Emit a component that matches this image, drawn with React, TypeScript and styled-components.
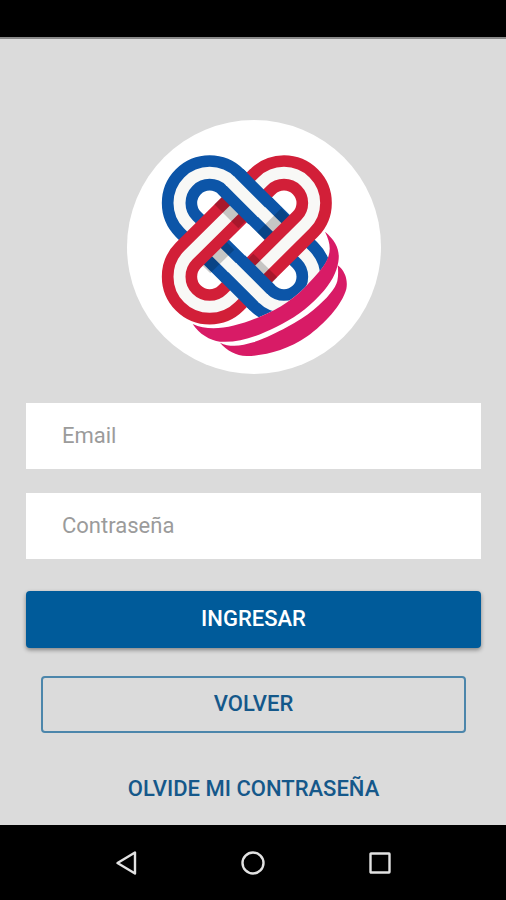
import React from "react";
import styled, { createGlobalStyle } from "styled-components";

const GlobalStyle = createGlobalStyle`
  *, *::before, *::after { box-sizing: border-box; }
  body {
    margin: 0;
    background: #dbdbdb;
    font-family: Roboto, "Liberation Sans", sans-serif;
  }
`;

const Screen = styled.div`
  display: flex;
  flex-direction: column;
  min-height: 100vh;
`;

const StatusBar = styled.header`
  height: 39px;
  background: #000;
  border-bottom: 2px solid #8a8a8a;
`;

const Content = styled.main`
  flex: 1;
  display: flex;
  flex-direction: column;
  align-items: center;
  padding: 81px 25px 16px 26px;
`;

const LogoArt = styled.svg`
  display: block;
  width: 254px;
  height: 254px;
`;

const Form = styled.form`
  display: flex;
  flex-direction: column;
  align-items: stretch;
  width: 100%;
  margin-top: 29px;
`;

const Field = styled.input`
  height: 66px;
  margin-bottom: 24px;
  padding: 0 36px 2px;
  border: 0;
  border-radius: 0;
  outline-color: #005b9a;
  background: #fff;
  color: #333;
  font: 400 22px/26px Roboto, "Liberation Sans", sans-serif;

  &::placeholder {
    color: #9b9b9b;
    opacity: 1;
  }
`;

const Button = styled.button<{ $outlined?: boolean }>`
  height: 57px;
  margin: ${(p) => (p.$outlined ? "28px 15px 0" : "8px 0 0")};
  padding: 0 16px 2px;
  border: ${(p) => (p.$outlined ? "2px solid #4c86ab" : "0")};
  border-radius: 4px;
  background: ${(p) => (p.$outlined ? "transparent" : "#005b9a")};
  box-shadow: ${(p) => (p.$outlined ? "none" : "0 2px 4px rgba(0, 0, 0, 0.4)")};
  color: ${(p) => (p.$outlined ? "#15588a" : "#fff")};
  font: 500 22px/26px Roboto, "Liberation Sans", sans-serif;
  text-transform: uppercase;
  cursor: pointer;
`;

const ForgotLink = styled.a`
  align-self: center;
  margin-top: 43px;
  color: #15588a;
  font-size: 22px;
  font-weight: 500;
  line-height: 26px;
  text-transform: uppercase;
  text-decoration: none;
`;

const NavBar = styled.nav`
  display: flex;
  justify-content: center;
  align-items: center;
  gap: 87px;
  height: 75px;
  background: #000;
`;

const NavButton = styled.button`
  display: flex;
  justify-content: center;
  align-items: center;
  width: 40px;
  height: 40px;
  padding: 0;
  border: 0;
  background: none;
  color: #e2e2e2;
  cursor: pointer;

  svg {
    width: 28px;
    height: 28px;
    fill: none;
    stroke: currentColor;
    stroke-width: 2.4;
    stroke-linejoin: round;
  }
`;

const BLUE = "#0c55a8";
const RED = "#d21f38";
const PINK = "#d81b66";
const STRIPE = "#f8f8f6";

const BLUE_LOOP =
  "M331 198L554 419A90 90 0 0 1 426 547L203 326A90 90 0 0 1 331 198Z";
const RED_LOOP =
  "M426 198A90 90 0 0 1 554 326L331 547A90 90 0 0 1 203 419Z";
const BLUE_OVER = "M331 198L421 288M426 547L336 457";
const BLUE_OVER_STRIPE = "M328 195L424 291M429 550L333 454";

function Ribbon({
  d,
  color,
  stripe = d,
}: {
  d: string;
  color: string;
  stripe?: string;
}) {
  return (
    <g fill="none">
      <path d={d} stroke={color} strokeWidth={106} />
      <path d={stripe} stroke={STRIPE} strokeWidth={36} />
    </g>
  );
}

function Logo() {
  return (
    <LogoArt viewBox="19 13 762 762" role="img" aria-label="Logo">
      <circle cx={400} cy={394} r={381} fill="#fff" />
      <Ribbon d={BLUE_LOOP} color={BLUE} />
      <g fill="#000" fillOpacity={0.2}>
        <path d="M410 350L434 374L506 302L482 278Z" />
        <path d="M246 450L269 473L341 402L317 378Z" />
      </g>
      <Ribbon d={RED_LOOP} color={RED} />
      <g fill="#000" fillOpacity={0.2}>
        <path d="M281 266L353 338L376 315L304 243Z" />
        <path d="M374 438L398 414L470 485L446 510Z" />
      </g>
      <Ribbon d={BLUE_OVER} stripe={BLUE_OVER_STRIPE} color={BLUE} />
      <path
        d="M613 348C640 402 634 432 568 498C528 545 478 578 418 603C340 636 270 650 216 625L300 684L390 721L540 670L646 580L670 480Z"
        fill="#fff"
      />
      <path
        d="M613 348C638 400 634 432 568 498C528 545 478 578 418 603C340 636 270 650 216 625C235 655 268 674 298 678C355 682 410 662 468 633C515 610 558 582 598 538C632 502 648 470 653 438C659 403 645 375 613 348Z"
        fill={PINK}
      />
      <path
        d="M651 449C674 466 682 494 677 520C664 568 612 624 560 662C500 704 430 721 378 721C345 719 320 706 298 681C330 697 365 690 398 680C434 668 470 650 498 635C530 617 556 601 578 583C620 548 645 518 650 496C653 480 653 465 651 449Z"
        fill={PINK}
      />
    </LogoArt>
  );
}

export default function App() {
  return (
    <>
      <GlobalStyle />
      <Screen>
        <StatusBar />
        <Content>
          <Logo />
          <Form onSubmit={(e) => e.preventDefault()}>
            <Field type="email" placeholder="Email" aria-label="Email" />
            <Field
              type="password"
              placeholder="Contraseña"
              aria-label="Contraseña"
            />
            <Button type="submit">Ingresar</Button>
            <Button type="button" $outlined>
              Volver
            </Button>
            <ForgotLink href="#">Olvide mi contraseña</ForgotLink>
          </Form>
        </Content>
        <NavBar>
          <NavButton type="button" aria-label="Atrás">
            <svg viewBox="0 0 28 28">
              <path d="M23 3.5V24.5L5.5 14Z" />
            </svg>
          </NavButton>
          <NavButton type="button" aria-label="Inicio">
            <svg viewBox="0 0 28 28">
              <circle cx="14" cy="14" r="10.5" />
            </svg>
          </NavButton>
          <NavButton type="button" aria-label="Recientes">
            <svg viewBox="0 0 28 28">
              <rect x="4.5" y="4.5" width="19" height="19" rx="0.5" />
            </svg>
          </NavButton>
        </NavBar>
      </Screen>
    </>
  );
}
